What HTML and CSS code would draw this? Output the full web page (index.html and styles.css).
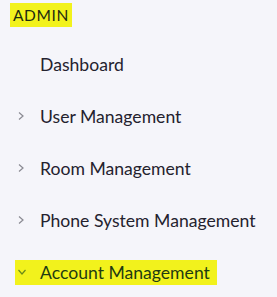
FILE: index.html
```html
<!DOCTYPE html>
<html lang="en">
<head>
  <meta charset="UTF-8">
  <meta name="viewport" content="width=device-width, initial-scale=1.0">
  <title>Admin Menu</title>
  <link rel="stylesheet" href="styles.css">
</head>
<body>
  <nav class="sidebar">
    <div class="section-title"><span class="mark">ADMIN</span></div>
    <ul class="menu">
      <li class="menu-item no-arrow"><span class="label">Dashboard</span></li>
      <li class="menu-item">
        <svg class="chevron" viewBox="0 0 8 10"><path d="M2 1.5 L6 5 L2 8.5" /></svg>
        <span class="label">User Management</span>
      </li>
      <li class="menu-item">
        <svg class="chevron" viewBox="0 0 8 10"><path d="M2 1.5 L6 5 L2 8.5" /></svg>
        <span class="label">Room Management</span>
      </li>
      <li class="menu-item">
        <svg class="chevron" viewBox="0 0 8 10"><path d="M2 1.5 L6 5 L2 8.5" /></svg>
        <span class="label">Phone System Management</span>
      </li>
      <li class="menu-item open">
        <span class="mark mark-row">
          <svg class="chevron down" viewBox="0 0 10 8"><path d="M1.5 2 L5 6 L8.5 2" /></svg>
          <span class="label">Account Management</span>
        </span>
      </li>
    </ul>
  </nav>
</body>
</html>
```

FILE: styles.css
```css
body {
  margin: 0;
  background-color: #f5f5fa;
  font-family: Lato, "Open Sans", sans-serif;
  color: #24222e;
}
.sidebar {
  padding-top: 3px;
}
.section-title {
  padding-left: 10px;
  font-size: 15.5px;
  line-height: 24px;
  height: 24px;
}
.mark {
  background-color: #f2f21c;
  color: #1d2b10;
}
.section-title .mark {
  display: inline-block;
  padding: 0 3px 0 3px;
  letter-spacing: 0.6px;
}
.menu {
  list-style-type: none;
  margin: 11px 0 0 0;
  padding: 0;
}
.menu-item {
  display: flex;
  align-items: center;
  height: 52px;
  padding-left: 17px;
  font-size: 17.6px;
}
.menu-item.no-arrow {
  padding-left: 40px;
}
.chevron {
  width: 8px;
  height: 10px;
  margin-right: 15px;
  fill: none;
  stroke: #8a8a92;
  stroke-width: 1.2;
}
.mark-row {
  display: flex;
  align-items: center;
  height: 25px;
  margin-left: -2px;
  padding: 0 7px 0 2px;
}
.chevron.down {
  width: 10px;
  height: 8px;
  margin-right: 13px;
  stroke: #6b8a1a;
}
.open .label {
  color: #1f3b12;
}
```
